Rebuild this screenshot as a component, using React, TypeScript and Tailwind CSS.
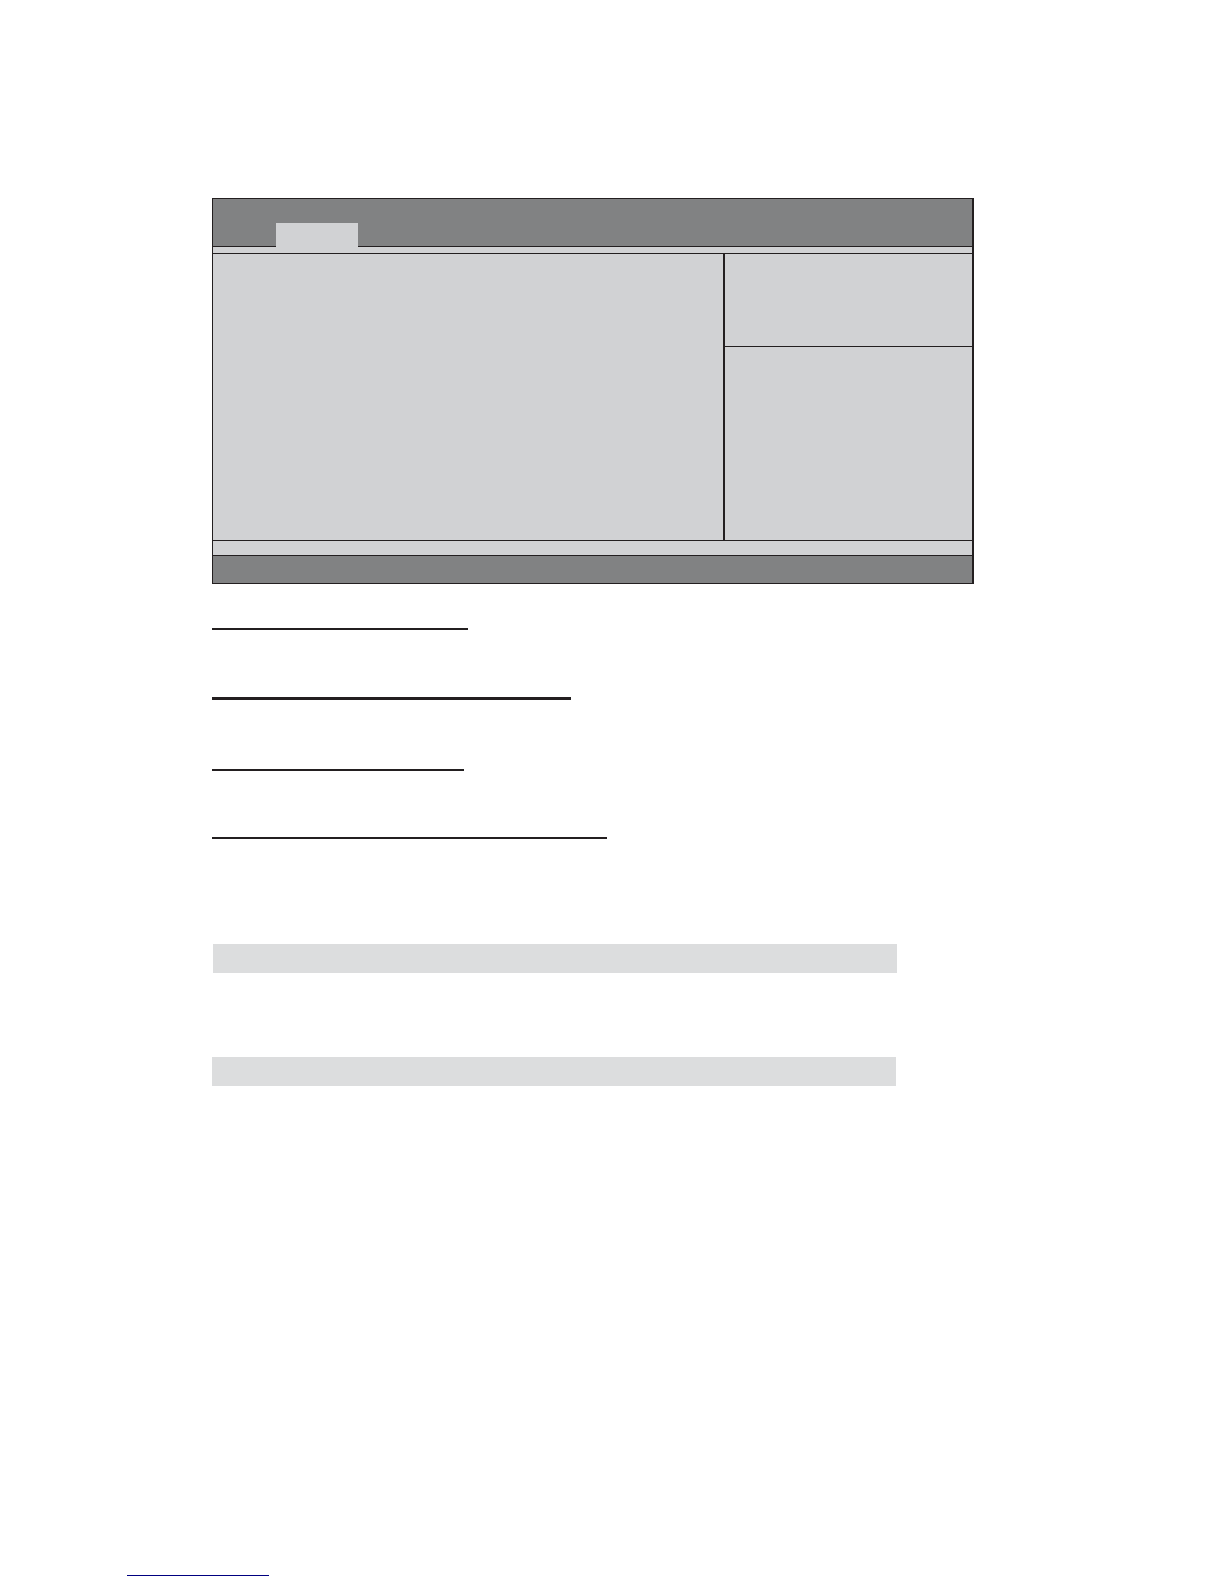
import React from 'react';

const SetupScreen: React.FC = () => {
  return (
    <section className="flex flex-col border border-r-2 border-[#231f20] bg-[#d1d2d4]">
      {/* Tab bar */}
      <div className="flex h-12 items-end border-b border-[#231f20] bg-[#818283] pl-[63px]">
        <button type="button" aria-label="Current tab" className="-mb-px h-6 w-[82px] bg-[#d1d2d4]" />
      </div>
      <div className="h-[7px] border-b border-[#231f20]" />

      {/* Settings on the left, help and key legend on the right */}
      <div className="flex min-h-[286px]">
        <div className="flex-1" />
        <aside className="flex w-[249px] flex-col border-l-2 border-[#231f20]">
          <div className="h-[93px] border-b border-[#231f20]" />
          <div className="flex-1" />
        </aside>
      </div>

      <div className="h-[15px] border-t border-[#231f20]" />
      <div className="h-7 border-t border-[#231f20] bg-[#818283]" />
    </section>
  );
};

const App: React.FC = () => {
  return (
    <div className="min-h-screen bg-white pb-2 font-['Liberation_Sans',sans-serif]">
      <main className="pt-[198px] pr-[250px] pl-[212px]">
        <SetupScreen />

        {/* Heading rules */}
        <hr className="mt-11 w-64 border-t-2 border-[#231f20]" />
        <hr className="mt-[67px] w-[359px] border-t-3 border-[#231f20]" />
        <hr className="mt-[69px] w-[252px] border-t-2 border-[#231f20]" />
        <hr className="mt-[66px] w-[395px] border-t-2 border-[#231f20]" />

        {/* Shaded bands */}
        <div className="mt-[105px] ml-px h-[29px] max-w-[684px] bg-[#dcddde]" />
        <div className="mt-[84px] h-[29px] max-w-[684px] bg-[#dcddde]" />
      </main>

      <footer className="mt-[489px] pl-[127px]">
        <a href="#" aria-label="Footer link" className="block w-[142px] border-b border-[#000080]" />
      </footer>
    </div>
  );
};

export default App;
